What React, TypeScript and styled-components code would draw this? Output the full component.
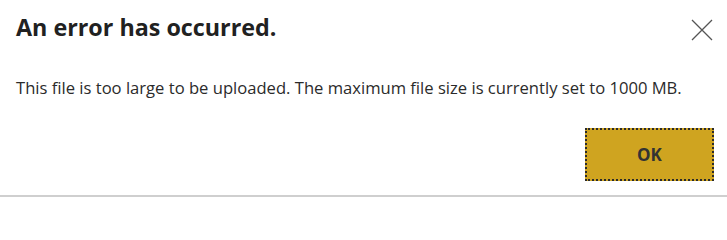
import React from 'react';
import styled, { createGlobalStyle } from 'styled-components';

const GlobalStyle = createGlobalStyle`
  html, body {
    margin: 0;
    padding: 0;
    background: #ffffff;
  }
  body {
    font-family: "Open Sans", "Noto Sans", Arial, sans-serif;
  }
`;

const Dialog = styled.div`
  box-sizing: border-box;
  width: 727px;
  height: 197px;
  background: #ffffff;
  border-bottom: 2px solid #cfcfcf;
  display: flex;
  flex-direction: column;
`;

const Header = styled.div`
  display: flex;
  align-items: flex-start;
  justify-content: space-between;
  padding: 12px 14px 0 16px;
`;

const Title = styled.h1`
  margin: 0;
  font-size: 23.3px;
  line-height: 30px;
  font-weight: 700;
  color: #212121;
`;

const CloseButton = styled.button`
  border: none;
  background: transparent;
  padding: 0;
  margin-top: 7px;
  width: 22px;
  height: 22px;
  display: flex;
  align-items: center;
  justify-content: center;
  cursor: pointer;
`;

const Message = styled.p`
  margin: 0;
  padding: 35px 16px 0 16px;
  font-size: 16.6px;
  line-height: 22px;
  color: #2b2b2b;
  white-space: nowrap;
`;

const Footer = styled.div`
  display: flex;
  justify-content: flex-end;
  padding: 29px 13px 0 0;
`;

const OkButton = styled.button`
  box-sizing: border-box;
  width: 129px;
  height: 53px;
  background: #cfa420;
  border: 2px dotted #2a2a2a;
  font-family: "Open Sans", Arial, sans-serif;
  font-size: 17px;
  font-weight: 700;
  color: #333333;
  cursor: pointer;
`;

export default function App() {
  return (
    <>
      <GlobalStyle />
      <Dialog>
        <Header>
          <Title>An error has occurred.</Title>
          <CloseButton aria-label="Close">
            <svg width="22" height="22" viewBox="0 0 22 22">
              <path d="M1 1 L21 21 M21 1 L1 21" stroke="#555" strokeWidth="1.3" fill="none" />
            </svg>
          </CloseButton>
        </Header>
        <Message>
          This file is too large to be uploaded. The maximum file size is currently set to 1000 MB.
        </Message>
        <Footer>
          <OkButton>OK</OkButton>
        </Footer>
      </Dialog>
    </>
  );
}
